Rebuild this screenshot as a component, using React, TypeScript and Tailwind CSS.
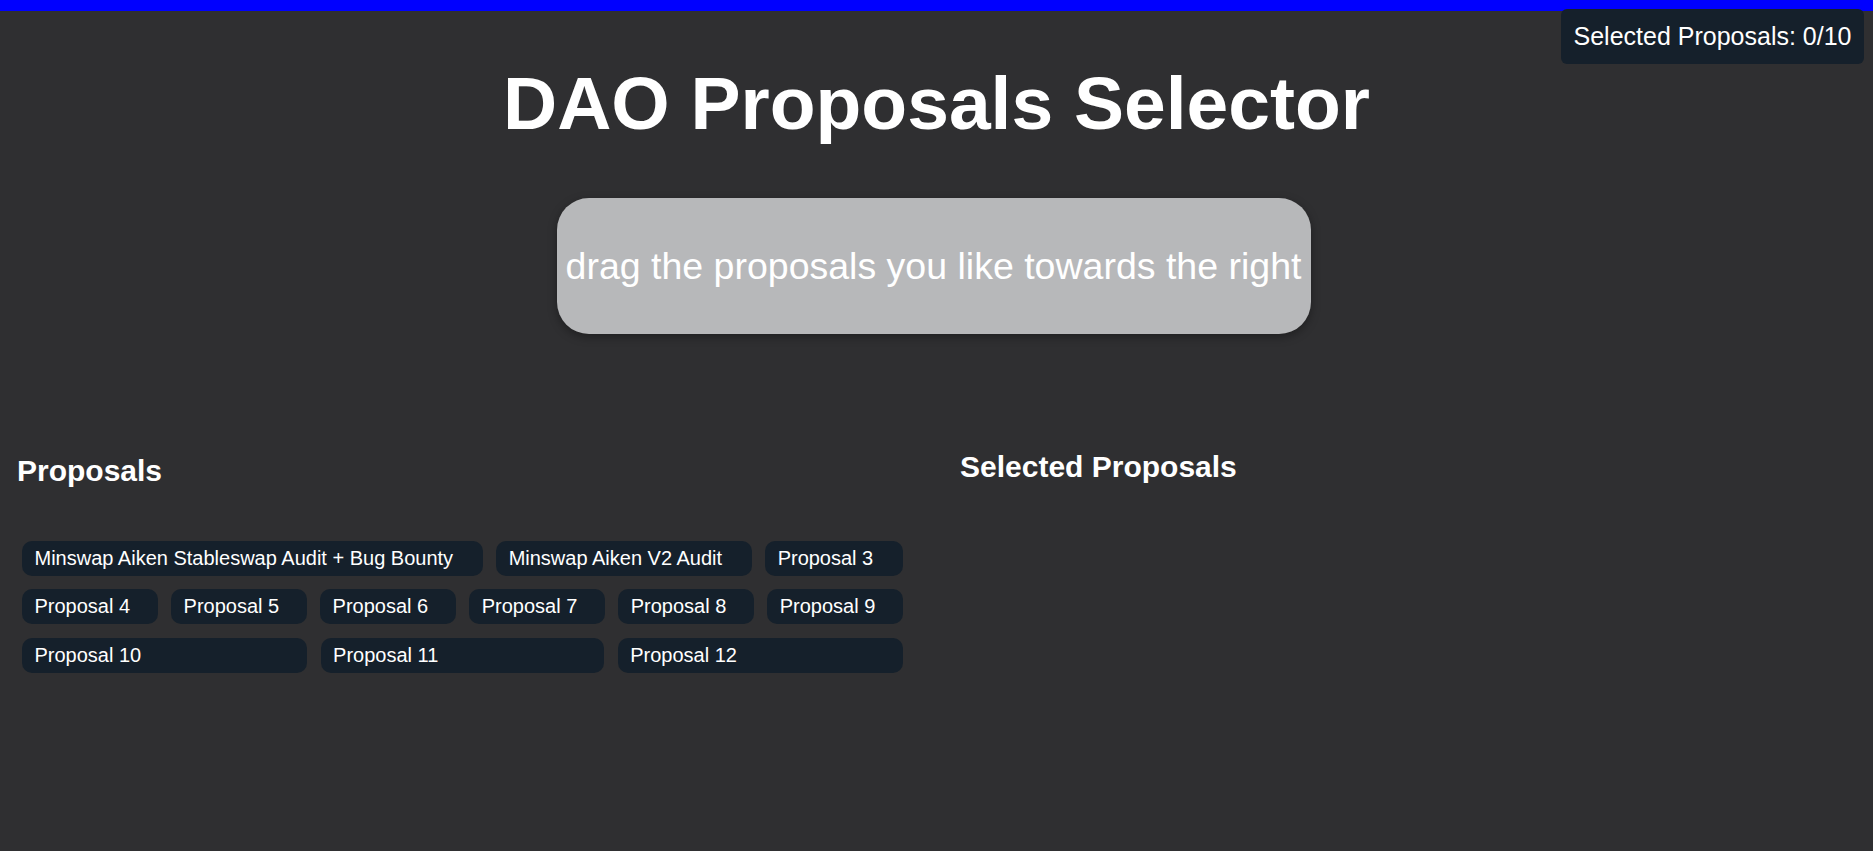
import React from 'react';

const proposals = [
  'Minswap Aiken Stableswap Audit + Bug Bounty',
  'Minswap Aiken V2 Audit',
  'Proposal 3',
  'Proposal 4',
  'Proposal 5',
  'Proposal 6',
  'Proposal 7',
  'Proposal 8',
  'Proposal 9',
  'Proposal 10',
  'Proposal 11',
  'Proposal 12',
];

const App = () => {
  const selected: string[] = [];

  return (
    <div className="min-h-[851px] bg-[#2f2f31] text-white font-['Liberation_Sans',Arial,sans-serif]">
      <div className="h-[11px] w-full bg-[#0000ff]" />

      {/* counter badge */}
      <div className="fixed top-[9px] right-[9px] z-10 rounded-[6px] bg-[#15202b] px-[12.5px] py-[13px] text-[25px] leading-[29px]">
        Selected Proposals: {selected.length}/10
      </div>

      <h1 className="mt-[49px] text-center text-[75px] font-bold leading-[86px]">DAO Proposals Selector</h1>

      <div className="mt-[52px] flex justify-center pr-[6px]">
        <div className="flex h-[136px] w-[754px] items-center justify-center rounded-[32px] bg-[#b7b8ba] shadow-[0_3px_10px_rgba(0,0,0,0.35)]">
          <p className="text-[37.5px] leading-[45px] text-white">drag the proposals you like towards the right</p>
        </div>
      </div>

      <div className="mt-[116px] flex">
        <div className="w-[936px] pl-[17px] pr-[28px] pt-[4px]">
          <h2 className="text-[30px] font-bold leading-[34px]">Proposals</h2>
          <div className="mt-[53px] flex flex-wrap gap-[13.3px] px-[5px]">
            {proposals.map((p) => (
              <div
                key={p}
                className="grow cursor-grab rounded-[10px] bg-[#15202b] px-[12.5px] py-[6px] text-[20px] leading-[23px]"
              >
                {p}
              </div>
            ))}
          </div>
        </div>
        <div className="flex-1 pl-[24px]">
          <h2 className="text-[30px] font-bold leading-[34px]">Selected Proposals</h2>
          <div className="mt-[20px] flex flex-wrap gap-[13.3px]">
            {selected.map((p) => (
              <div key={p} className="rounded-[10px] bg-[#15202b] px-[12.5px] py-[6px] text-[20px]">
                {p}
              </div>
            ))}
          </div>
        </div>
      </div>
    </div>
  );
};

export default App;
